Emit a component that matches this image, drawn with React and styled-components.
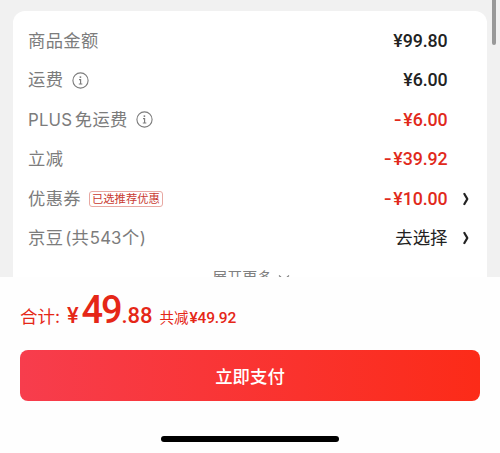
import React from "react";
import styled, { createGlobalStyle } from "styled-components";

const GlobalStyle = createGlobalStyle`
  * { box-sizing: border-box; }
  body {
    margin: 0;
    background: #fff;
    font-family: Inter, "Noto Sans CJK SC", sans-serif;
    overflow: hidden;
  }
`;

const Screen = styled.main`
  width: 500px;
  height: 453px;
  display: flex;
  flex-direction: column;
  background: #fefefe;
`;

const Sheet = styled.section`
  height: 277px;
  flex: none;
  display: flex;
  align-items: flex-start;
  padding: 11px 4px 0 13px;
  background: #f1f1f1;
  overflow: hidden;
`;

const Card = styled.div`
  width: 474px;
  height: 300px;
  flex: none;
  padding: 10.4px 15.5px 0 15px;
  border-radius: 12px;
  background: #fff;
`;

const ScrollThumb = styled.div`
  width: 4px;
  height: 45px;
  margin: -11px 0 0 5px;
  flex: none;
  border-radius: 0 0 2px 2px;
  background: #999;
`;

const Row = styled.div`
  height: 39.4px;
  display: flex;
  align-items: center;
`;

const Label = styled.span`
  display: flex;
  align-items: center;
  font-size: 17.3px;
  line-height: 24px;
  letter-spacing: 0.35px;
  color: #7c7c7c;
  white-space: pre;
  font-weight: 400;
`;

const Latin = styled.span`
  font-size: 16.8px;
  letter-spacing: ${(p) => p.$spacing || "0"};
  margin-left: ${(p) => p.$before || "0"};
  margin-right: ${(p) => p.$gap || "0"};
`;

const InfoSvg = styled.svg`
  width: 17px;
  height: 17px;
  margin-left: 8.5px;
  flex: none;
`;

const Tag = styled.span`
  width: 74px;
  height: 16px;
  margin-left: 8px;
  display: flex;
  align-items: center;
  justify-content: center;
  border: 1px solid #e8a8a2;
  border-radius: 3px;
  color: #c93a30;
  font-size: 11.3px;
  line-height: 14px;
  font-weight: 400;
`;

const Amount = styled.span`
  margin-left: auto;
  display: flex;
  align-items: center;
  font-family: Roboto, "Noto Sans CJK SC", sans-serif;
  font-size: 17.8px;
  line-height: 24px;
  font-weight: 500;
  letter-spacing: -0.1px;
  color: ${(p) => (p.$red ? "#e1291b" : "#222")};
`;

const Minus = styled.span`
  width: 9px;
  transform: scaleX(1.25);
  transform-origin: left;
`;

const Choose = styled.span`
  margin-left: auto;
  font-size: 17.4px;
  line-height: 24px;
  color: #222;
`;

const Trail = styled.span`
  width: 24px;
  height: 24px;
  flex: none;
  display: flex;
  align-items: center;
  padding-left: 13px;
`;

const Expand = styled.div`
  display: flex;
  justify-content: center;
  align-items: center;
  gap: 6px;
  padding: 7px 0 0 3px;
  color: #808080;
  font-size: 15px;
  line-height: 26px;
`;

const Footer = styled.footer`
  flex: 1;
  display: flex;
  flex-direction: column;
  align-items: center;
`;

const Total = styled.div`
  width: 460px;
  height: 73px;
  display: flex;
  align-items: baseline;
  padding-top: 8px;
  color: #e52717;
  white-space: nowrap;
`;

const TotalLabel = styled.span`
  width: 47px;
  font-size: 17.5px;
  line-height: 49px;
`;

const Price = styled.span`
  width: ${(p) => p.$width};
  font-family: Roboto, sans-serif;
  font-weight: 500;
  font-size: ${(p) => p.$size};
  line-height: 50px;
  letter-spacing: ${(p) => p.$spacing || "0"};
`;

const SavedLabel = styled.span`
  width: 30px;
  font-size: 14.5px;
`;

const PayButton = styled.button`
  width: 460px;
  height: 51px;
  flex: none;
  padding: 0 0 1px;
  border: 0;
  border-radius: 8px;
  background: linear-gradient(90deg, #f73d4d, #fc2b18);
  color: #fff;
  font-family: "Noto Sans CJK SC", sans-serif;
  font-size: 17.4px;
  font-weight: 500;
`;

const HomeIndicator = styled.div`
  width: 178px;
  height: 6px;
  margin-top: 35px;
  border-radius: 3px;
  background: #000;
`;

const InfoIcon = () => (
  <InfoSvg viewBox="0 0 17 17" fill="none" stroke="#7c7c7c">
    <circle cx="8.5" cy="8.5" r="7.6" strokeWidth="1.1" />
    <circle cx="8.4" cy="5.1" r="0.95" fill="#7c7c7c" stroke="none" />
    <path d="M7 7.6h1.6v4.3M6.8 12h3.5" strokeWidth="1.15" />
  </InfoSvg>
);

const Chevron = () => (
  <svg width="9" height="14" viewBox="0 0 9 14" fill="none">
    <path d="M3 1.1C3.8 3 5.3 5 6.3 7C5.3 9 3.8 11 3 12.9" stroke="#222" strokeWidth="2.1" />
  </svg>
);

const rows = [
  { label: "商品金额", amount: "¥99.80" },
  { label: "运费", info: true, amount: "¥6.00" },
  { label: <><Latin $spacing="0.2px" $gap="2.5px">PLUS</Latin>免运费</>, info: true, amount: "¥6.00", red: true },
  { label: "立减", amount: "¥39.92", red: true },
  { label: "优惠券", tag: "已选推荐优惠", amount: "¥10.00", red: true, arrow: true },
  {
    label: (
      <>
        京豆<Latin $before="2px">(</Latin>共
        <Latin $spacing="0.1px" $before="0.8px" $gap="0.5px">543</Latin>个<Latin>)</Latin>
      </>
    ),
    choose: "去选择",
    arrow: true,
  },
];

export default function App() {
  return (
    <Screen>
      <GlobalStyle />
      <Sheet>
        <Card>
          {rows.map((row, i) => (
            <Row key={i}>
              <Label>{row.label}</Label>
              {row.info && <InfoIcon />}
              {row.tag && <Tag>{row.tag}</Tag>}
              {row.choose ? (
                <Choose>{row.choose}</Choose>
              ) : (
                <Amount $red={row.red}>
                  {row.red && <Minus>-</Minus>}
                  {row.amount}
                </Amount>
              )}
              <Trail>{row.arrow && <Chevron />}</Trail>
            </Row>
          ))}
          <Expand>
            展开更多
            <svg width="12" height="8" viewBox="0 0 12 8" fill="none">
              <path d="M1 1.5L6 6L11 1.5" stroke="#808080" strokeWidth="1.2" />
            </svg>
          </Expand>
        </Card>
        <ScrollThumb />
      </Sheet>
      <Footer>
        <Total>
          <TotalLabel>合计:</TotalLabel>
          <Price $width="14.5px" $size="22px">¥</Price>
          <Price $width="40px" $size="38px" $spacing="-2.2px">49</Price>
          <Price $width="38px" $size="22px">.88</Price>
          <SavedLabel>共减</SavedLabel>
          <Price $width="48px" $size="15.5px" $spacing="-0.2px">¥49.92</Price>
        </Total>
        <PayButton>立即支付</PayButton>
        <HomeIndicator />
      </Footer>
    </Screen>
  );
}
